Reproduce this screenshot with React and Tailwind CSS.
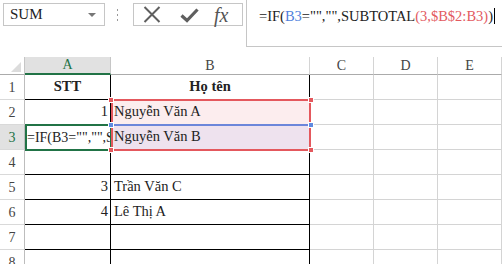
import React from "react";

const cols = [
    { key: "A", w: "w-[86px]" },
    { key: "B", w: "w-[199px]" },
    { key: "C", w: "w-[64px]" },
    { key: "D", w: "w-[64px]" },
    { key: "E", w: "w-[64px]" },
];

const rows = [
    { n: 1, A: "STT", B: "Họ tên", bold: true },
    { n: 2, A: "1", B: "Nguyễn Văn A" },
    { n: 3, A: '=IF(B3="","",SUBTOTAL(3,$B$2:B3))', B: "Nguyễn Văn B", editing: true },
    { n: 4, A: "", B: "" },
    { n: 5, A: "3", B: "Trần Văn C" },
    { n: 6, A: "4", B: "Lê Thị A" },
    { n: 7, A: "", B: "" },
    { n: 8, A: "", B: "" },
];

function Handle({ className }) {
    return <div className={"absolute w-[6px] h-[6px] border border-white " + className} />;
}

export default function App() {
    return (
        <div className="relative w-[502px] h-[264px] overflow-hidden bg-white font-['Liberation_Serif',serif] text-[#222]">
            {/* Toolbar */}
            <div className="flex items-start h-[57px]">
                {/* Name box */}
                <div className="shrink-0 mt-[3px] ml-[3px] w-[102px] h-[23px] border border-[#c6c6c6] flex items-center justify-between pl-[6px] pr-[8px]">
                    <span className="text-[15px] leading-none">SUM</span>
                    <span className="w-0 h-0 border-l-[4px] border-r-[4px] border-t-[4px] border-l-transparent border-r-transparent border-t-[#777]" />
                </div>

                {/* Dots */}
                <div className="shrink-0 mt-[9px] ml-[12px] flex flex-col gap-[3px]">
                    <span className="w-[1px] h-[2px] bg-[#999]" />
                    <span className="w-[1px] h-[2px] bg-[#999]" />
                    <span className="w-[1px] h-[2px] bg-[#999]" />
                </div>

                {/* Cancel / Enter / fx */}
                <div className="shrink-0 mt-[3px] ml-[15px] w-[110px] h-[23px] border border-[#c6c6c6] flex items-center pl-[9px]">
                    <svg width="18" height="17" viewBox="0 0 18 17">
                        <path d="M1.5 1 L16.5 16 M16.5 1 L1.5 16" stroke="#5f5f5f" strokeWidth="2" fill="none" />
                    </svg>
                    <svg className="ml-[19px]" width="19" height="16" viewBox="0 0 19 16">
                        <path d="M1.5 8.5 L7 13.5 L17.5 2.5" stroke="#5f5f5f" strokeWidth="3.2" fill="none" />
                    </svg>
                    <span className="ml-[15px] text-[20px] italic leading-none text-[#555]">fx</span>
                </div>

                {/* Formula bar */}
                <div className="min-w-0 ml-[3px] flex-1 h-[47px] border-l border-b border-[#c6c6c6] pl-[12px] pt-[7px] flex items-start overflow-hidden">
                    <span className="text-[14.5px] leading-[18px] whitespace-nowrap">
                        =IF(<span className="text-[#4f7fdc]">B3</span>="","",SUBTOTAL
                        <span className="text-[#e35a5f]">(3,$B$2:B3)</span>)
                    </span>
                    <span className="ml-[1px] mt-[1px] w-[1px] h-[16px] bg-black" />
                </div>
            </div>

            {/* Column headers */}
            <div className="flex h-[18px]">
                <div className="relative w-[25px] h-full border-r border-b border-r-[#c6c6c6] border-b-[#ababab]">
                    <svg className="absolute right-[3px] bottom-[2px]" width="10" height="10" viewBox="0 0 10 10">
                        <path d="M10 0 L10 10 L0 10 Z" fill="#dcdcdc" />
                    </svg>
                </div>
                {cols.map((c) => (
                    <div
                        key={c.key}
                        className={
                            c.w +
                            " h-full flex items-center justify-center text-[14px] leading-none " +
                            (c.key === "A"
                                ? "bg-[#e1e1e1] text-[#217346] border-r border-r-[#c6c6c6] border-b-2 border-b-[#217346]"
                                : "text-[#444] border-r border-r-[#d4d4d4] border-b border-b-[#ababab]")
                        }
                    >
                        {c.key}
                    </div>
                ))}
            </div>

            {/* Rows */}
            {rows.map((r) => (
                <div key={r.n} className="flex h-[25px]">
                    <div
                        className={
                            "w-[25px] h-full flex items-end justify-center pb-[1px] text-[14px] border-r border-r-[#bdbdbd] border-b border-b-[#d9d9d9] " +
                            (r.editing ? "bg-[#e1e1e1] text-[#217346]" : "text-[#444]")
                        }
                    >
                        {r.n}
                    </div>
                    <div
                        className={
                            "w-[86px] h-full flex items-end pb-[1px] overflow-hidden whitespace-nowrap text-[14.5px] border-r border-b border-black " +
                            (r.bold ? "justify-center font-bold" : r.editing ? "justify-start pl-[2px] text-[14px]" : "justify-end pr-[2px]")
                        }
                    >
                        {r.A}
                    </div>
                    <div
                        className={
                            "w-[199px] h-full flex items-end pb-[1px] text-[14.5px] border-r border-b border-black " +
                            (r.bold ? "justify-center font-bold" : "justify-start pl-[3px]") +
                            (r.n === 2 ? " bg-[#fcedee]" : r.n === 3 ? " bg-[#eee2ee]" : "")
                        }
                    >
                        {r.B}
                    </div>
                    <div className="w-[64px] h-full border-r border-b border-[#d4d4d4]" />
                    <div className="w-[64px] h-full border-r border-b border-[#d4d4d4]" />
                    <div className="w-[64px] h-full border-r border-b border-[#d4d4d4]" />
                </div>
            ))}

            {/* Active cell A3 */}
            <div className="absolute left-[25px] top-[124px] w-[87px] h-[27px] border-2 border-[#217346]" />

            {/* Range $B$2:B3 (red) and B3 (blue) */}
            <div className="absolute left-[111px] top-[99px] w-[200px] h-[52px] border-2 border-[#e4585d]" />
            <div className="absolute left-[111px] top-[124px] w-[200px] h-[2px] bg-[#6c86da]" />
            <Handle className="left-[108px] top-[97px] bg-[#e4585d]" />
            <Handle className="left-[308px] top-[97px] bg-[#e4585d]" />
            <Handle className="left-[108px] top-[122px] bg-[#5f8ae0]" />
            <Handle className="left-[308px] top-[122px] bg-[#5f8ae0]" />
            <Handle className="left-[108px] top-[147px] bg-[#e4585d]" />
            <Handle className="left-[308px] top-[147px] bg-[#e4585d]" />
        </div>
    );
}
